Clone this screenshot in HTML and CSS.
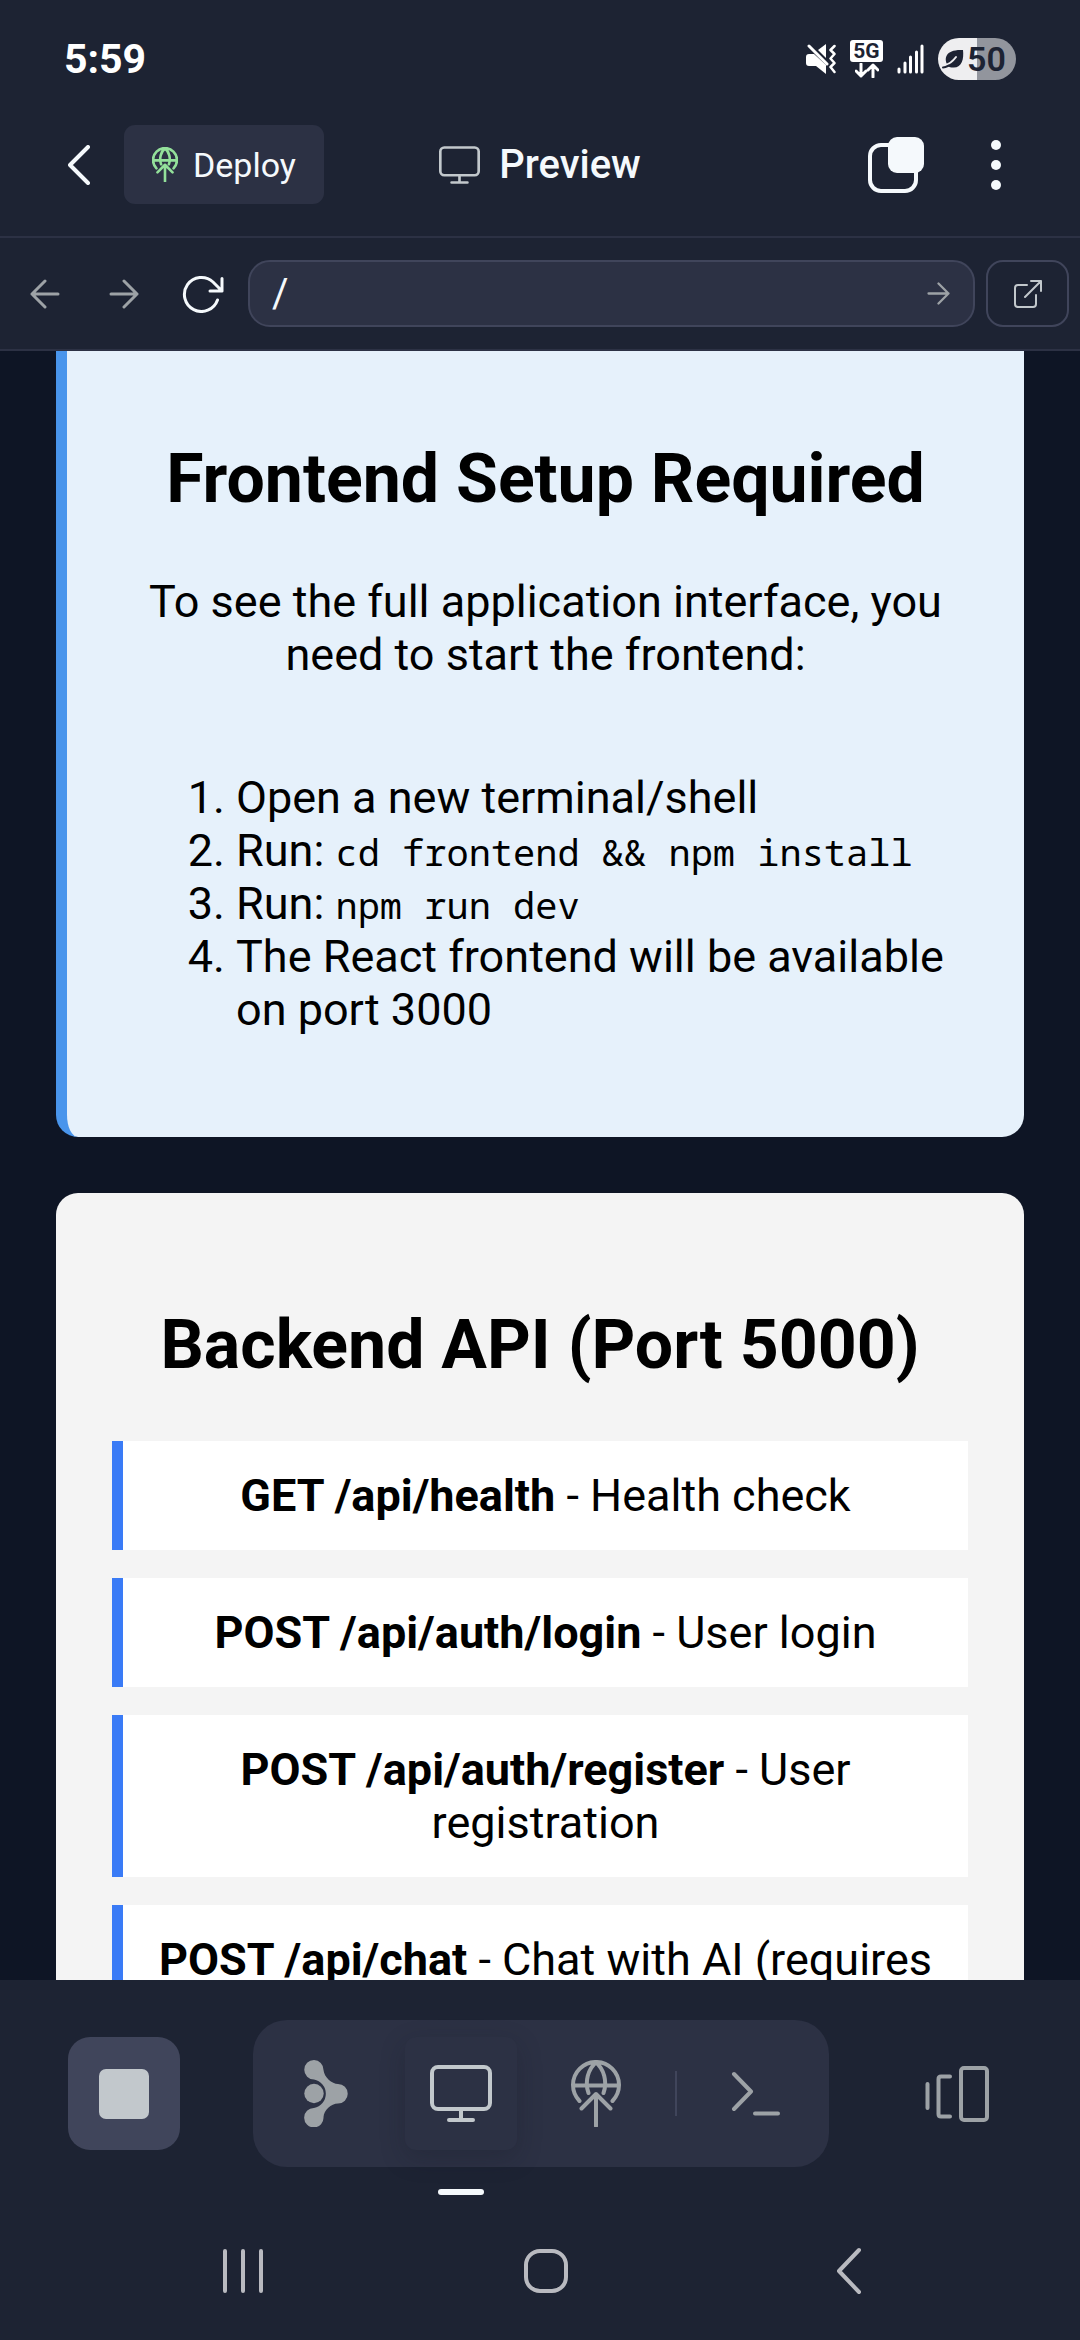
FILE: index.html
```html
<!DOCTYPE html>
<html lang="en">
<head>
<meta charset="utf-8">
<meta name="viewport" content="width=device-width, initial-scale=1">
<title>Preview</title>
<link rel="stylesheet" href="styles.css">
</head>
<body>
<svg class="defs" aria-hidden="true">
  <symbol id="monitor" viewBox="0 0 62 57"><rect x="2" y="2" width="58" height="42" rx="6"/><path d="M31 44v11M19 55h24"/></symbol>
  <symbol id="deploy" viewBox="0 0 50 67"><path d="M8.500 41a23 23 0 1 1 33 0M2 25.500h46M17.500 33C13.500 22 17 9 25 2.500M32.500 33C36.500 22 33 9 25 2.500M25 34v32M10.500 48.500 25 34l14.500 14.500"/></symbol>
  <symbol id="arrow" viewBox="0 0 30 30"><path d="M2 15h26M15 2l13 13-13 13"/></symbol>
</svg>

<div class="status">
  <span class="clock">5:59</span>
  <div class="status-icons">
    <svg class="mute" viewBox="0 0 30 30"><path class="solid" d="M0 13q0-3 3-3h5l12 11v9L10 22H3q-3 0-3-3zM12 6l8-6v14z"/><path d="M3 2l18 18" stroke-width="3"/><path d="M28.500 2l-4 4 4 4-4 4.500 4 4.500-4 4 4 5" stroke-width="2.500"/></svg>
    <div class="network">
      <span class="network-label">5G</span>
      <svg class="network-arrows" viewBox="0 0 24 15"><path d="M6 1v12M1 8l5 5 5-5M18 14V2M13 7l5-5 5 5"/></svg>
    </div>
    <svg class="signal" viewBox="0 0 27 30"><path d="M2 25v3M8 19v9M13.500 13v15M19.500 8v20M25 2v26"/></svg>
    <div class="battery">
      <svg class="leaf" viewBox="0 0 22 20"><path class="solid" d="M21 1C22 10 20 19 11 18.500c-2 0-4 0-5-1.500C1 9 4 0 21 1z"/><path class="stem" d="M3 16C8 15 11 12 14 8"/><path class="stem-end" d="M1 18.500c2 0 4-1 6-2"/></svg>
      <span>50</span>
    </div>
  </div>
</div>

<header class="header">
  <div class="header-left">
    <button class="plain" aria-label="Back"><svg class="chevron" viewBox="0 0 22 40"><path d="M20 2 2 20l18 18"/></svg></button>
    <button class="deploy"><svg class="deploy-icon"><use href="#deploy"/></svg>Deploy</button>
  </div>
  <h1 class="title"><svg class="title-icon"><use href="#monitor"/></svg>Preview</h1>
  <div class="header-right">
    <button class="plain" aria-label="Tabs"><svg class="tabs" viewBox="0 0 56 56"><rect x="2" y="8" width="46" height="46" rx="11"/><rect class="solid" x="20" y="0" width="36" height="36" rx="9"/></svg></button>
    <button class="plain" aria-label="Menu"><svg class="dots" viewBox="0 0 10 50"><circle cx="5" cy="5" r="5"/><circle cx="5" cy="25" r="5"/><circle cx="5" cy="45" r="5"/></svg></button>
  </div>
</header>

<div class="addressbar">
  <button class="nav-button dim" aria-label="Go back"><svg class="arrow flip"><use href="#arrow"/></svg></button>
  <button class="nav-button dim" aria-label="Go forward"><svg class="arrow"><use href="#arrow"/></svg></button>
  <button class="nav-button" aria-label="Reload"><svg class="reload" viewBox="0 0 42 38"><path d="M35.500 25A17 17 0 1 1 31 7l9 9M40 3.500V16H28"/></svg></button>
  <form class="address">
    <input class="address-input" type="text" value="/" aria-label="Path">
    <button class="plain dim" type="button" aria-label="Go"><svg class="arrow-small"><use href="#arrow"/></svg></button>
  </form>
  <button class="external" aria-label="Open in new tab"><svg class="external-icon" viewBox="0 0 28 28"><path d="M13 5H4Q1 5 1 8v16q0 3 3 3h15q3 0 3-3v-9M11 17 27 1M17 1h10v10"/></svg></button>
</div>

<main class="page">
  <section class="card setup">
    <h2 class="heading">Frontend Setup Required</h2>
    <p class="lead">To see the full application interface, you need to start the frontend:</p>
    <ol class="steps">
      <li>Open a new terminal/shell</li>
      <li>Run: <code>cd frontend &amp;&amp; npm install</code></li>
      <li>Run: <code>npm run dev</code></li>
      <li>The React frontend will be available on port 3000</li>
    </ol>
  </section>
  <section class="card backend">
    <h2 class="heading">Backend API (Port 5000)</h2>
    <ul class="endpoints">
      <li class="endpoint"><strong>GET /api/health</strong> - Health check</li>
      <li class="endpoint"><strong>POST /api/auth/login</strong> - User login</li>
      <li class="endpoint"><strong>POST /api/auth/register</strong> - User registration</li>
      <li class="endpoint"><strong>POST /api/chat</strong> - Chat with AI (requires</li>
    </ul>
  </section>
</main>

<footer class="footer">
  <div class="toolbar">
    <button class="tool stop" aria-label="Stop"><span class="stop-square"></span></button>
    <nav class="tools" aria-label="Tools">
      <button class="tool" aria-label="Agent"><svg class="agent" viewBox="0 0 44 67"><path d="M10 0a10 10 0 0 1 9.500 10C20 17 28 24 34 24a9.700 9.700 0 0 1 0 19.500C27 43.500 20 50 19.500 57A9.700 9.700 0 1 1 10 48 14.500 14.500 0 0 0 10 19.500 9.700 9.700 0 0 1 10 0z"/><circle cx="10" cy="33.500" r="9.700"/></svg></button>
      <button class="tool active" aria-label="Preview"><svg class="tool-monitor"><use href="#monitor"/></svg></button>
      <button class="tool" aria-label="Deployments"><svg class="tool-deploy"><use href="#deploy"/></svg></button>
      <span class="divider"></span>
      <button class="tool" aria-label="Shell"><svg class="shell" viewBox="0 0 50 45"><path d="M3 3l17 17.500L3 38M24 42.500h23"/></svg></button>
    </nav>
    <button class="tool" aria-label="Switch view"><svg class="switcher" viewBox="0 0 64 56"><path d="M2.500 18v24M25 10.500H16q-2.500 0-2.500 2.500v35q0 2.500 2.500 2.500h9"/><rect x="36" y="2" width="26" height="52" rx="3"/></svg></button>
  </div>
  <nav class="system-nav" aria-label="System">
    <button class="plain" aria-label="Recents"><svg class="recents" viewBox="0 0 42 46"><path d="M3 3v40M21 3v40M39 3v40"/></svg></button>
    <button class="plain" aria-label="Home"><svg class="home" viewBox="0 0 46 46"><rect x="3" y="3" width="40" height="40" rx="14"/></svg></button>
    <button class="plain" aria-label="System back"><svg class="system-back" viewBox="0 0 26 48"><path d="M23 3 3 24l20 21"/></svg></button>
  </nav>
</footer>
</body>
</html>
```
FILE: styles.css
```css
* { box-sizing: border-box; }

:root {
  --bar: #1d2333;
  --raised: #2c3144;
  --line: #40455b;
  --white: #f5f9fc;
  --soft: #c2c8cc;
  --dim: #9da2a6;
}

body {
  margin: 0;
  height: 100vh;
  display: flex;
  flex-direction: column;
  background: #0e1525;
  color: var(--white);
  font-family: Roboto, "Liberation Sans", sans-serif;
}

button {
  display: flex;
  align-items: center;
  justify-content: center;
  padding: 0;
  border: 0;
  background: none;
  color: inherit;
  font: inherit;
}

svg {
  display: block;
  flex: none;
  fill: none;
  stroke: currentColor;
  stroke-width: 4;
  stroke-linecap: round;
  stroke-linejoin: round;
}

.defs { position: absolute; width: 0; height: 0; }
.solid { fill: currentColor; stroke: none; }
.dim { color: var(--dim); }

/* Status bar */
.status {
  display: flex;
  justify-content: space-between;
  align-items: center;
  padding: 38px 64px 0;
  background: var(--bar);
  color: #fff;
}
.clock { font-size: 41px; line-height: 42px; font-weight: 700; }
.status-icons { display: flex; align-items: center; gap: 14px; }
.mute { width: 30px; height: 30px; }
.network { display: flex; flex-direction: column; align-items: center; gap: 1px; width: 33px; }
.network-label {
  width: 33px;
  border-radius: 3px;
  background: #fff;
  color: var(--bar);
  font-size: 21px;
  line-height: 22px;
  font-weight: 700;
  text-align: center;
}
.network-arrows { width: 24px; height: 15px; stroke-width: 3; }
.signal { width: 27px; height: 30px; stroke-width: 3; }
.battery {
  display: flex;
  align-items: center;
  gap: 3px;
  height: 42px;
  width: 78px;
  padding-left: 4px;
  border-radius: 21px;
  background: linear-gradient(90deg, #eeeef0 50%, #92959d 50%);
  color: var(--bar);
  font-size: 34px;
  font-weight: 600;
}
.leaf { width: 22px; height: 20px; }
.stem { stroke: #eeeef0; stroke-width: 2; }
.stem-end { stroke-width: 2; }

/* App header */
.header {
  display: grid;
  grid-template-columns: 1fr auto 1fr;
  align-items: center;
  padding: 45px 68px 32px;
  border-bottom: 2px solid var(--raised);
  background: var(--bar);
}
.header-left { display: flex; align-items: center; gap: 34px; }
.chevron { width: 22px; height: 40px; }
.deploy {
  gap: 15px;
  height: 79px;
  padding: 0 28px;
  border-radius: 11px;
  background: var(--raised);
  font-size: 34px;
}
.deploy-icon { width: 26px; height: 35px; color: #93e09a; stroke-width: 5; }
.title {
  display: flex;
  align-items: center;
  gap: 19px;
  margin: 0;
  font-size: 40px;
  line-height: 47px;
  font-weight: 500;
}
.title-icon { width: 41px; height: 38px; color: var(--soft); }
.header-right {
  display: flex;
  align-items: center;
  justify-content: flex-end;
  gap: 67px;
  padding-right: 11px;
}
.tabs { width: 56px; height: 56px; }
.dots { width: 10px; height: 50px; fill: currentColor; stroke: none; }

/* Address bar */
.addressbar {
  display: flex;
  gap: 11px;
  padding: 22px 11px;
  border-bottom: 2px solid var(--raised);
  background: var(--bar);
}
.nav-button { width: 68px; }
.arrow { width: 30px; height: 30px; stroke-width: 3; }
.flip { transform: scaleX(-1); }
.arrow-small { width: 23px; height: 23px; stroke-width: 3; }
.reload { width: 42px; height: 38px; stroke-width: 3; }
.address {
  display: flex;
  flex: 1;
  align-items: center;
  height: 67px;
  padding: 0 23px 0 22px;
  border: 2px solid var(--line);
  border-radius: 22px;
  background: var(--raised);
}
.address-input {
  flex: 1;
  min-width: 0;
  padding: 0;
  border: 0;
  outline: 0;
  background: none;
  color: var(--white);
  font: 40px Roboto, "Liberation Sans", sans-serif;
}
.external {
  width: 83px;
  border: 2px solid var(--line);
  border-radius: 17px;
  color: var(--soft);
}
.external-icon { width: 28px; height: 28px; stroke-width: 2; }

/* Previewed page */
.page {
  flex: 1;
  min-height: 0;
  overflow-y: auto;
  scrollbar-width: none;
  padding: 0 56px;
  color: #000;
  font-size: 45px;
  line-height: 53px;
}
.card { padding: 56px; }
.setup {
  padding-top: 32px;
  border-left: 11px solid #4995ec;
  border-radius: 0 0 22px 22px;
  background: #e6f1fb;
}
.backend {
  margin-top: 56px;
  border-radius: 22px;
  background: #f4f4f4;
}
.heading {
  margin: 56px 0;
  font-size: 68px;
  line-height: 80px;
  font-weight: 700;
  text-align: center;
}
.lead { margin: 0 0 90px; text-align: center; }
.steps { margin: 0 0 45px; padding-left: 113px; }
.steps code { font-family: "Noto Sans Mono", "DejaVu Sans Mono", monospace; font-size: 37px; line-height: 45px; }
.endpoints {
  display: flex;
  flex-direction: column;
  gap: 28px;
  margin: 0;
  padding: 0;
  list-style: none;
}
.endpoint {
  padding: 28px;
  border-left: 11px solid #3a7bf6;
  background: #fff;
  text-align: center;
}

/* Bottom toolbar */
.footer { background: var(--bar); }
.toolbar {
  display: flex;
  align-items: center;
  justify-content: space-between;
  padding: 40px 67px 38px 68px;
}
.tool { width: 112px; height: 113px; color: var(--dim); }
.stop { border-radius: 22px; background: var(--line); }
.stop-square { width: 50px; height: 50px; border-radius: 7px; background: var(--soft); }
.tools {
  display: flex;
  align-items: center;
  gap: 23px;
  padding: 17px;
  border-radius: 34px;
  background: var(--raised);
}
.active {
  position: relative;
  border-radius: 11px;
  background: var(--raised);
  color: var(--soft);
  box-shadow: 0 8px 24px rgba(20, 24, 36, 0.25);
}
.active::after {
  content: "";
  position: absolute;
  top: 152px;
  left: 33px;
  width: 46px;
  height: 6px;
  border-radius: 3px;
  background: var(--white);
}
.agent { width: 44px; height: 67px; fill: currentColor; stroke: none; }
.tool-monitor { width: 62px; height: 57px; }
.tool-deploy { width: 50px; height: 67px; }
.divider { width: 2px; height: 45px; background: var(--line); }
.shell { width: 50px; height: 45px; }
.switcher { width: 64px; height: 56px; }

/* System navigation */
.system-nav {
  display: grid;
  grid-template-columns: repeat(3, 1fr);
  grid-template-rows: 132px;
  padding: 0 80px 3px 92px;
  color: #b9bac0;
}
.recents { width: 42px; height: 46px; }
.home { width: 46px; height: 46px; }
.system-back { width: 26px; height: 48px; }
```
